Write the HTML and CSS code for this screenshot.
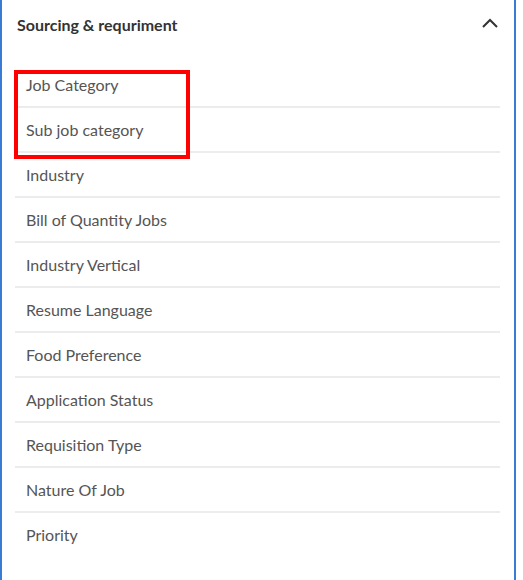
FILE: index.html
```html
<!DOCTYPE html>
<html>
<head>
<meta charset="utf-8">
<link rel="stylesheet" href="styles.css">
</head>
<body>
<div class="panel">
  <div class="header">
    <span class="title">Sourcing &amp; requriment</span>
    <svg class="chevron" width="18" height="12" viewBox="0 0 18 12"><polyline points="2,10 9,3 16,10" fill="none" stroke="#333" stroke-width="2"/></svg>
  </div>
  <ul class="list">
    <li>Job Category</li>
    <li>Sub job category</li>
    <li>Industry</li>
    <li>Bill of Quantity Jobs</li>
    <li>Industry Vertical</li>
    <li>Resume Language</li>
    <li>Food Preference</li>
    <li>Application Status</li>
    <li>Requisition Type</li>
    <li>Nature Of Job</li>
    <li>Priority</li>
  </ul>
  <div class="highlight"></div>
</div>
</body>
</html>
```
FILE: styles.css
```css
html, body {
  margin: 0;
  padding: 0;
  background: #fff;
}
.panel {
  position: relative;
  width: 516px;
  min-height: 580px;
  box-sizing: border-box;
  border-left: 2px solid #3a7bd5;
  border-right: 2px solid #3a7bd5;
  font-family: Lato, "Open Sans", sans-serif;
}
.header {
  height: 63px;
  display: flex;
  align-items: flex-start;
  justify-content: space-between;
  padding: 0 15px 0 15px;
  box-sizing: border-box;
}
.title {
  font-size: 16px;
  font-weight: 700;
  color: #333;
  margin-top: 15px;
}
.chevron {
  margin-top: 17px;
}
.list {
  list-style: none;
  margin: 0 14px 0 13px;
  padding: 0;
}
.list li {
  height: 43px;
  line-height: 43px;
  padding-left: 11px;
  font-size: 16px;
  color: #555;
  border-bottom: 2px solid #ececec;
}
.list li:last-child {
  border-bottom: none;
}
.highlight {
  position: absolute;
  left: 12px;
  top: 70px;
  width: 168px;
  height: 81px;
  border: 4px solid #ff0000;
}
```
